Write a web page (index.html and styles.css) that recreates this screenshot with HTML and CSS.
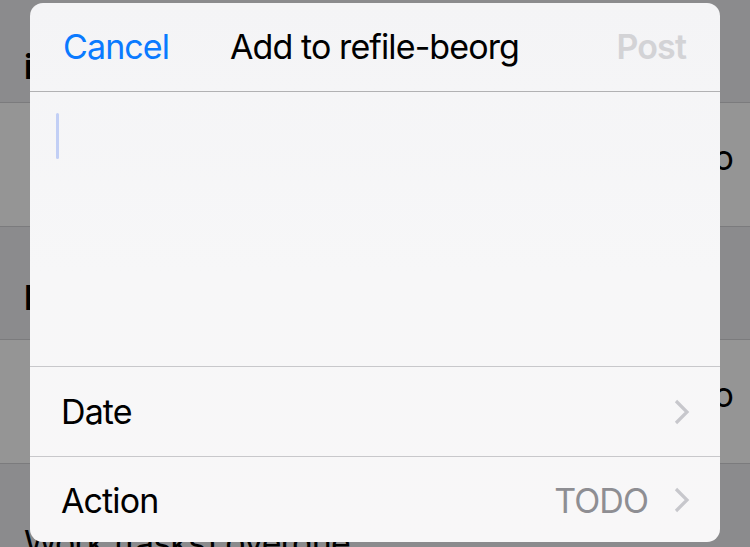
FILE: index.html
```html
<!DOCTYPE html>
<html lang="en">
<head>
  <meta charset="UTF-8">
  <meta name="viewport" content="width=device-width,initial-scale=1">
  <title>Add to refile-beorg</title>
  <link rel="stylesheet" href="styles.css">
</head>
<body>
  <div class="list">
    <div class="section-head"><span>inbox</span></div>
    <div class="row"><span class="row-text">todo</span></div>
    <div class="section-head dark"><span>Later</span></div>
    <div class="row"><span class="row-text">memo</span></div>
    <div class="section-head last"><span>Work (tasks) overdue</span></div>
  </div>

  <div class="sheet">
    <div class="sheet-head">
      <span class="btn-cancel">Cancel</span>
      <span class="sheet-title">Add to refile-beorg</span>
      <span class="btn-post">Post</span>
    </div>
    <div class="sheet-body">
      <i class="caret"></i>
    </div>
    <div class="sheet-row flex flex-align-center">
      <span class="flex-1">Date</span>
      <svg class="chevron" width="16" height="26" viewBox="0 0 16 26"><path d="M2 2 L13 13 L2 24" fill="none" stroke="#c7c7cc" stroke-width="3.2"/></svg>
    </div>
    <div class="sheet-row flex flex-align-center">
      <span class="flex-1">Action</span>
      <span class="row-value">TODO</span>
      <svg class="chevron" width="16" height="26" viewBox="0 0 16 26"><path d="M2 2 L13 13 L2 24" fill="none" stroke="#c7c7cc" stroke-width="3.2"/></svg>
    </div>
  </div>
</body>
</html>
```
FILE: styles.css
```css
*{
  margin: 0;
  padding: 0;
  box-sizing: border-box;
}
.flex{display:flex;}
.flex-1{flex:1;}
.flex-align-center{align-items:center;}

body{
  width: 750px;
  height: 547px;
  overflow: hidden;
  background: #8b8b8d;
  font-family: Inter, "Liberation Sans", sans-serif;
  font-size: 34px;
  letter-spacing: -0.9px;
  color: #000;
  position: relative;
}

/* blurred list behind the sheet */
.list{
  width: 100%;
}
.section-head{
  height: 103px;
  padding: 46px 0 0 24px;
  font-weight: 700;
  border-bottom: 1px solid #7b7b7d;
  background: #8b8b8d;
}
.section-head.dark{
  height: 113px;
  padding-top: 50px;
}
.section-head.last{
  height: 84px;
  padding-top: 58px;
  font-weight: 400;
  border-bottom: 0;
}
.row{
  height: 124px;
  padding-top: 34px;
  text-align: right;
  padding-right: 17px;
  background: #959595;
  border-bottom: 1px solid #7b7b7d;
}

/* share sheet */
.sheet{
  position: absolute;
  left: 30px;
  top: 3px;
  width: 690px;
  height: 539px;
  border-radius: 13px;
  background: linear-gradient(180deg, #f4f4f6 0%, #f7f7f8 50%, #f8f7f8 100%);
  overflow: hidden;
}
.sheet-head{
  display: grid;
  grid-template-columns: 1fr auto 1fr;
  align-items: center;
  height: 89px;
  padding: 0 34px 2px 33px;
  border-bottom: 1px solid #b1b1b3;
}
.btn-cancel{
  color: #0a7aff;
}
.sheet-title{
  text-align: center;
}
.btn-post{
  justify-self: end;
  color: #d3d3d6;
  font-weight: 600;
}
.sheet-body{
  height: 275px;
  padding: 21px 0 0 26px;
  border-bottom: 1px solid #c8c8cb;
}
.caret{
  display: block;
  width: 3px;
  height: 46px;
  border-radius: 2px;
  background: #c2cff5;
}
.sheet-row{
  height: 90px;
  padding: 0 30px 0 31px;
  border-bottom: 1px solid #c8c8cb;
}
.sheet-row:last-child{
  border-bottom: 0;
  height: 86px;
}
.row-value{
  color: #8e8e93;
  margin-right: 26px;
}
.chevron{
  display: block;
}
```
